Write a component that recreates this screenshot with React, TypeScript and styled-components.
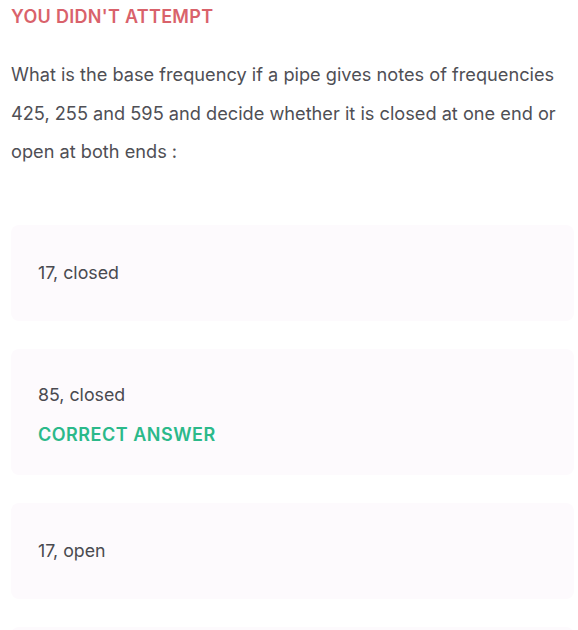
import React from 'react';
import styled, { createGlobalStyle } from 'styled-components';

const GlobalStyle = createGlobalStyle`
  html, body {
    margin: 0;
    padding: 0;
    background: #ffffff;
  }
  body {
    font-family: Inter, Lato, "Open Sans", sans-serif;
    -webkit-font-smoothing: antialiased;
  }
`;

const Page = styled.div`
  width: 578px;
  padding: 6px 4px 0 11px;
  box-sizing: border-box;
`;

const Status = styled.div`
  color: #d9626b;
  font-size: 18px;
  font-weight: 600;
  line-height: 22px;
  letter-spacing: 0.3px;
`;

const Question = styled.p`
  margin: 27px 0 0;
  color: #4f4f55;
  font-size: 18.2px;
  line-height: 38.5px;
`;

const Options = styled.div`
  display: flex;
  flex-direction: column;
  gap: 28px;
  margin-top: 54px;
`;

const OptionCard = styled.div<{ $hasLabel?: boolean }>`
  background: #fdfafd;
  border-radius: 8px;
  padding: ${({ $hasLabel }) => ($hasLabel ? '35px 27px 29px' : '37px 27px 37px')};
  display: flex;
  flex-direction: column;
  gap: 18px;
`;

const OptionText = styled.div`
  color: #4a4a50;
  font-size: 17.8px;
  line-height: 22px;
`;

const CorrectLabel = styled.div`
  color: #2bb98a;
  font-size: 18px;
  font-weight: 600;
  line-height: 22px;
  letter-spacing: 0.5px;
`;

interface Option {
  text: string;
  correct?: boolean;
}

const options: Option[] = [
  { text: '17, closed' },
  { text: '85, closed', correct: true },
  { text: '17, open' },
  { text: '85, open' },
];

export default function App() {
  return (
    <>
      <GlobalStyle />
      <Page>
        <Status>YOU DIDN'T ATTEMPT</Status>
        <Question>
          What is the base frequency if a pipe gives notes of frequencies 425, 255 and 595 and decide
          whether it is closed at one end or open at both ends :
        </Question>
        <Options>
          {options.map((o) => (
            <OptionCard key={o.text} $hasLabel={o.correct}>
              <OptionText>{o.text}</OptionText>
              {o.correct && <CorrectLabel>CORRECT ANSWER</CorrectLabel>}
            </OptionCard>
          ))}
        </Options>
      </Page>
    </>
  );
}
